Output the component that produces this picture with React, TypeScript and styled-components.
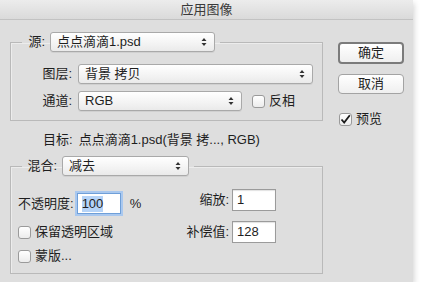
import styled, { createGlobalStyle } from 'styled-components';

const GlobalStyle = createGlobalStyle`
  html, body {
    margin: 0;
    padding: 0;
    background: #ffffff;
  }
  body {
    font-family: "Liberation Sans", "Noto Sans CJK SC", sans-serif;
    font-size: 13px;
    color: #1e1e1e;
  }
`;

const Window = styled.div`
  width: 413px;
  height: 282px;
  background: #dedede;
  box-shadow: 1px 3px 6px rgba(0, 0, 0, 0.18);
  display: flex;
  flex-direction: column;
  overflow: hidden;
`;

const TitleBar = styled.div`
  height: 19px;
  flex: none;
  border-bottom: 1px solid #c2c2c2;
  background: linear-gradient(#ececec, #dadada);
  display: flex;
  align-items: center;
  justify-content: center;
  font-size: 13px;
  color: #3a3a3a;
  line-height: 19px;
`;

const Body = styled.div`
  display: flex;
  flex: 1;
`;

const MainColumn = styled.div`
  width: 313px;
  padding-left: 10px;
  padding-top: 12px;
  display: flex;
  flex-direction: column;
`;

const SideColumn = styled.div`
  margin-left: 15px;
  padding-top: 22px;
  width: 66px;
  display: flex;
  flex-direction: column;
  align-items: stretch;
`;

const Group = styled.fieldset<{ $top: number; $bottom: number }>`
  margin: 0;
  padding: ${(p) => p.$top}px 9px ${(p) => p.$bottom}px 0;
  border: 1px solid #b9b9b9;
  box-shadow: inset 1px 1px 0 #ececec;
  min-width: 0;
`;

const Legend = styled.legend<{ $gap: number }>`
  margin-left: 11px;
  padding: 0 5px;
  display: flex;
  align-items: center;
  gap: ${(p) => p.$gap}px;
  height: 20px;
  line-height: 20px;
`;

const Label = styled.span<{ $width?: number }>`
  display: inline-block;
  width: ${(p) => (p.$width ? `${p.$width}px` : 'auto')};
  text-align: right;
  white-space: nowrap;
  line-height: 16px;
`;

const SelectBox = styled.div<{ $width: number }>`
  width: ${(p) => p.$width}px;
  height: 20px;
  box-sizing: border-box;
  border: 1px solid #a9a9a9;
  border-radius: 3px;
  background: linear-gradient(#ffffff, #f3f3f3 60%, #eaeaea);
  box-shadow: 0 1px 0 rgba(0, 0, 0, 0.06);
  display: flex;
  align-items: center;
  justify-content: space-between;
  padding: 0 7px 0 6px;
  line-height: 18px;
  white-space: nowrap;
`;

const Arrows = () => (
  <svg width="6" height="10" viewBox="0 0 6 10">
    <path d="M0.5 4 L3 1 L5.5 4 Z M0.5 6 L3 9 L5.5 6 Z" fill="#333" />
  </svg>
);

const Select = ({ width, value }: { width: number; value: string }) => (
  <SelectBox $width={width}>
    <span>{value}</span>
    <Arrows />
  </SelectBox>
);

const FieldRow = styled.div<{ $mt?: number }>`
  display: flex;
  align-items: center;
  height: 20px;
  margin-top: ${(p) => p.$mt ?? 0}px;
  gap: 6px;
`;

const CheckBoxBox = styled.span`
  width: 13px;
  height: 13px;
  box-sizing: border-box;
  border: 1px solid #9a9a9a;
  border-radius: 3px;
  background: linear-gradient(#ffffff, #ececec);
  display: inline-flex;
  align-items: center;
  justify-content: center;
  flex: none;
`;

const CheckLabel = styled.label<{ $mt?: number; $ml?: number }>`
  display: flex;
  align-items: center;
  gap: 4px;
  height: 14px;
  line-height: 14px;
  margin-top: ${(p) => p.$mt ?? 0}px;
  margin-left: ${(p) => p.$ml ?? 0}px;
  white-space: nowrap;
`;

const Check = ({
  checked,
  label,
  mt,
  ml,
}: {
  checked?: boolean;
  label: string;
  mt?: number;
  ml?: number;
}) => (
  <CheckLabel $mt={mt} $ml={ml}>
    <CheckBoxBox>
      {checked && (
        <svg width="11" height="11" viewBox="0 0 11 11">
          <path d="M1.5 5.5 L4.2 8.6 L9.8 1.2" fill="none" stroke="#1a1a1a" strokeWidth="1.8" />
        </svg>
      )}
    </CheckBoxBox>
    <span>{label}</span>
  </CheckLabel>
);

const TargetLine = styled.div`
  margin: 11px 0 8px 33px;
  height: 16px;
  line-height: 16px;
  white-space: nowrap;
`;

const TargetValue = styled.span`
  margin-left: 6px;
`;

const BlendContent = styled.div`
  display: flex;
`;

const LeftCol = styled.div`
  width: 150px;
  padding-left: 7px;
  padding-top: 17px;
  display: flex;
  flex-direction: column;
`;

const RightCol = styled.div`
  padding-top: 13px;
  display: flex;
  flex-direction: column;
  gap: 10px;
`;

const InputRow = styled.div<{ $h: number }>`
  display: flex;
  align-items: center;
  height: ${(p) => p.$h}px;
  gap: 3px;
  white-space: nowrap;
`;

const TextInput = styled.div<{ $focus?: boolean; $h: number }>`
  width: 44px;
  height: ${(p) => p.$h}px;
  box-sizing: border-box;
  background: #ffffff;
  border: 1px solid ${(p) => (p.$focus ? '#6f9fd8' : '#9b9b9b')};
  box-shadow: ${(p) => (p.$focus ? '0 0 0 2px #a9c8ef' : 'inset 0 1px 1px rgba(0,0,0,0.12)')};
  display: flex;
  align-items: center;
  padding-left: 4px;
  line-height: 16px;
`;

const Selected = styled.span`
  background: #b5d3f7;
`;

const Percent = styled.span`
  margin-left: 6px;
`;

const Button = styled.div<{ $primary?: boolean; $mt?: number }>`
  height: ${(p) => (p.$primary ? 22 : 20)}px;
  box-sizing: border-box;
  margin-top: ${(p) => p.$mt ?? 0}px;
  border: ${(p) => (p.$primary ? '2px solid #7b7b7b' : '1px solid #a3a3a3')};
  border-radius: 4px;
  background: linear-gradient(#ffffff, #efefef);
  display: flex;
  align-items: center;
  justify-content: center;
  line-height: 16px;
`;

const PreviewWrap = styled.div`
  margin-top: 18px;
  padding-left: 1px;
`;

export default function App() {
  return (
    <>
      <GlobalStyle />
      <Window>
        <TitleBar>应用图像</TitleBar>
        <Body>
          <MainColumn>
            <Group $top={12} $bottom={9}>
              <Legend $gap={5}>
                <Label $width={18}>源:</Label>
                <Select width={165} value="点点滴滴1.psd" />
              </Legend>
              <FieldRow>
                <Label $width={61}>图层:</Label>
                <Select width={235} value="背景 拷贝" />
              </FieldRow>
              <FieldRow $mt={7}>
                <Label $width={61}>通道:</Label>
                <Select width={164} value="RGB" />
                <Check label="反相" ml={4} />
              </FieldRow>
            </Group>

            <TargetLine>
              目标:<TargetValue>点点滴滴1.psd(背景 拷..., RGB)</TargetValue>
            </TargetLine>

            <Group $top={0} $bottom={10}>
              <Legend $gap={5}>
                <Label $width={30}>混合:</Label>
                <Select width={127} value="减去" />
              </Legend>
              <BlendContent>
                <LeftCol>
                  <InputRow $h={21}>
                    <Label>不透明度:</Label>
                    <TextInput $focus $h={21}>
                      <Selected>100</Selected>
                    </TextInput>
                    <Percent>%</Percent>
                  </InputRow>
                  <Check label="保留透明区域" mt={11} />
                  <Check label="蒙版..." mt={10} />
                </LeftCol>
                <RightCol>
                  <InputRow $h={22}>
                    <Label $width={61}>缩放:</Label>
                    <TextInput $h={22}>1</TextInput>
                  </InputRow>
                  <InputRow $h={22}>
                    <Label $width={61}>补偿值:</Label>
                    <TextInput $h={22}>128</TextInput>
                  </InputRow>
                </RightCol>
              </BlendContent>
            </Group>
          </MainColumn>

          <SideColumn>
            <Button $primary>确定</Button>
            <Button $mt={10}>取消</Button>
            <PreviewWrap>
              <Check checked label="预览" />
            </PreviewWrap>
          </SideColumn>
        </Body>
      </Window>
    </>
  );
}
